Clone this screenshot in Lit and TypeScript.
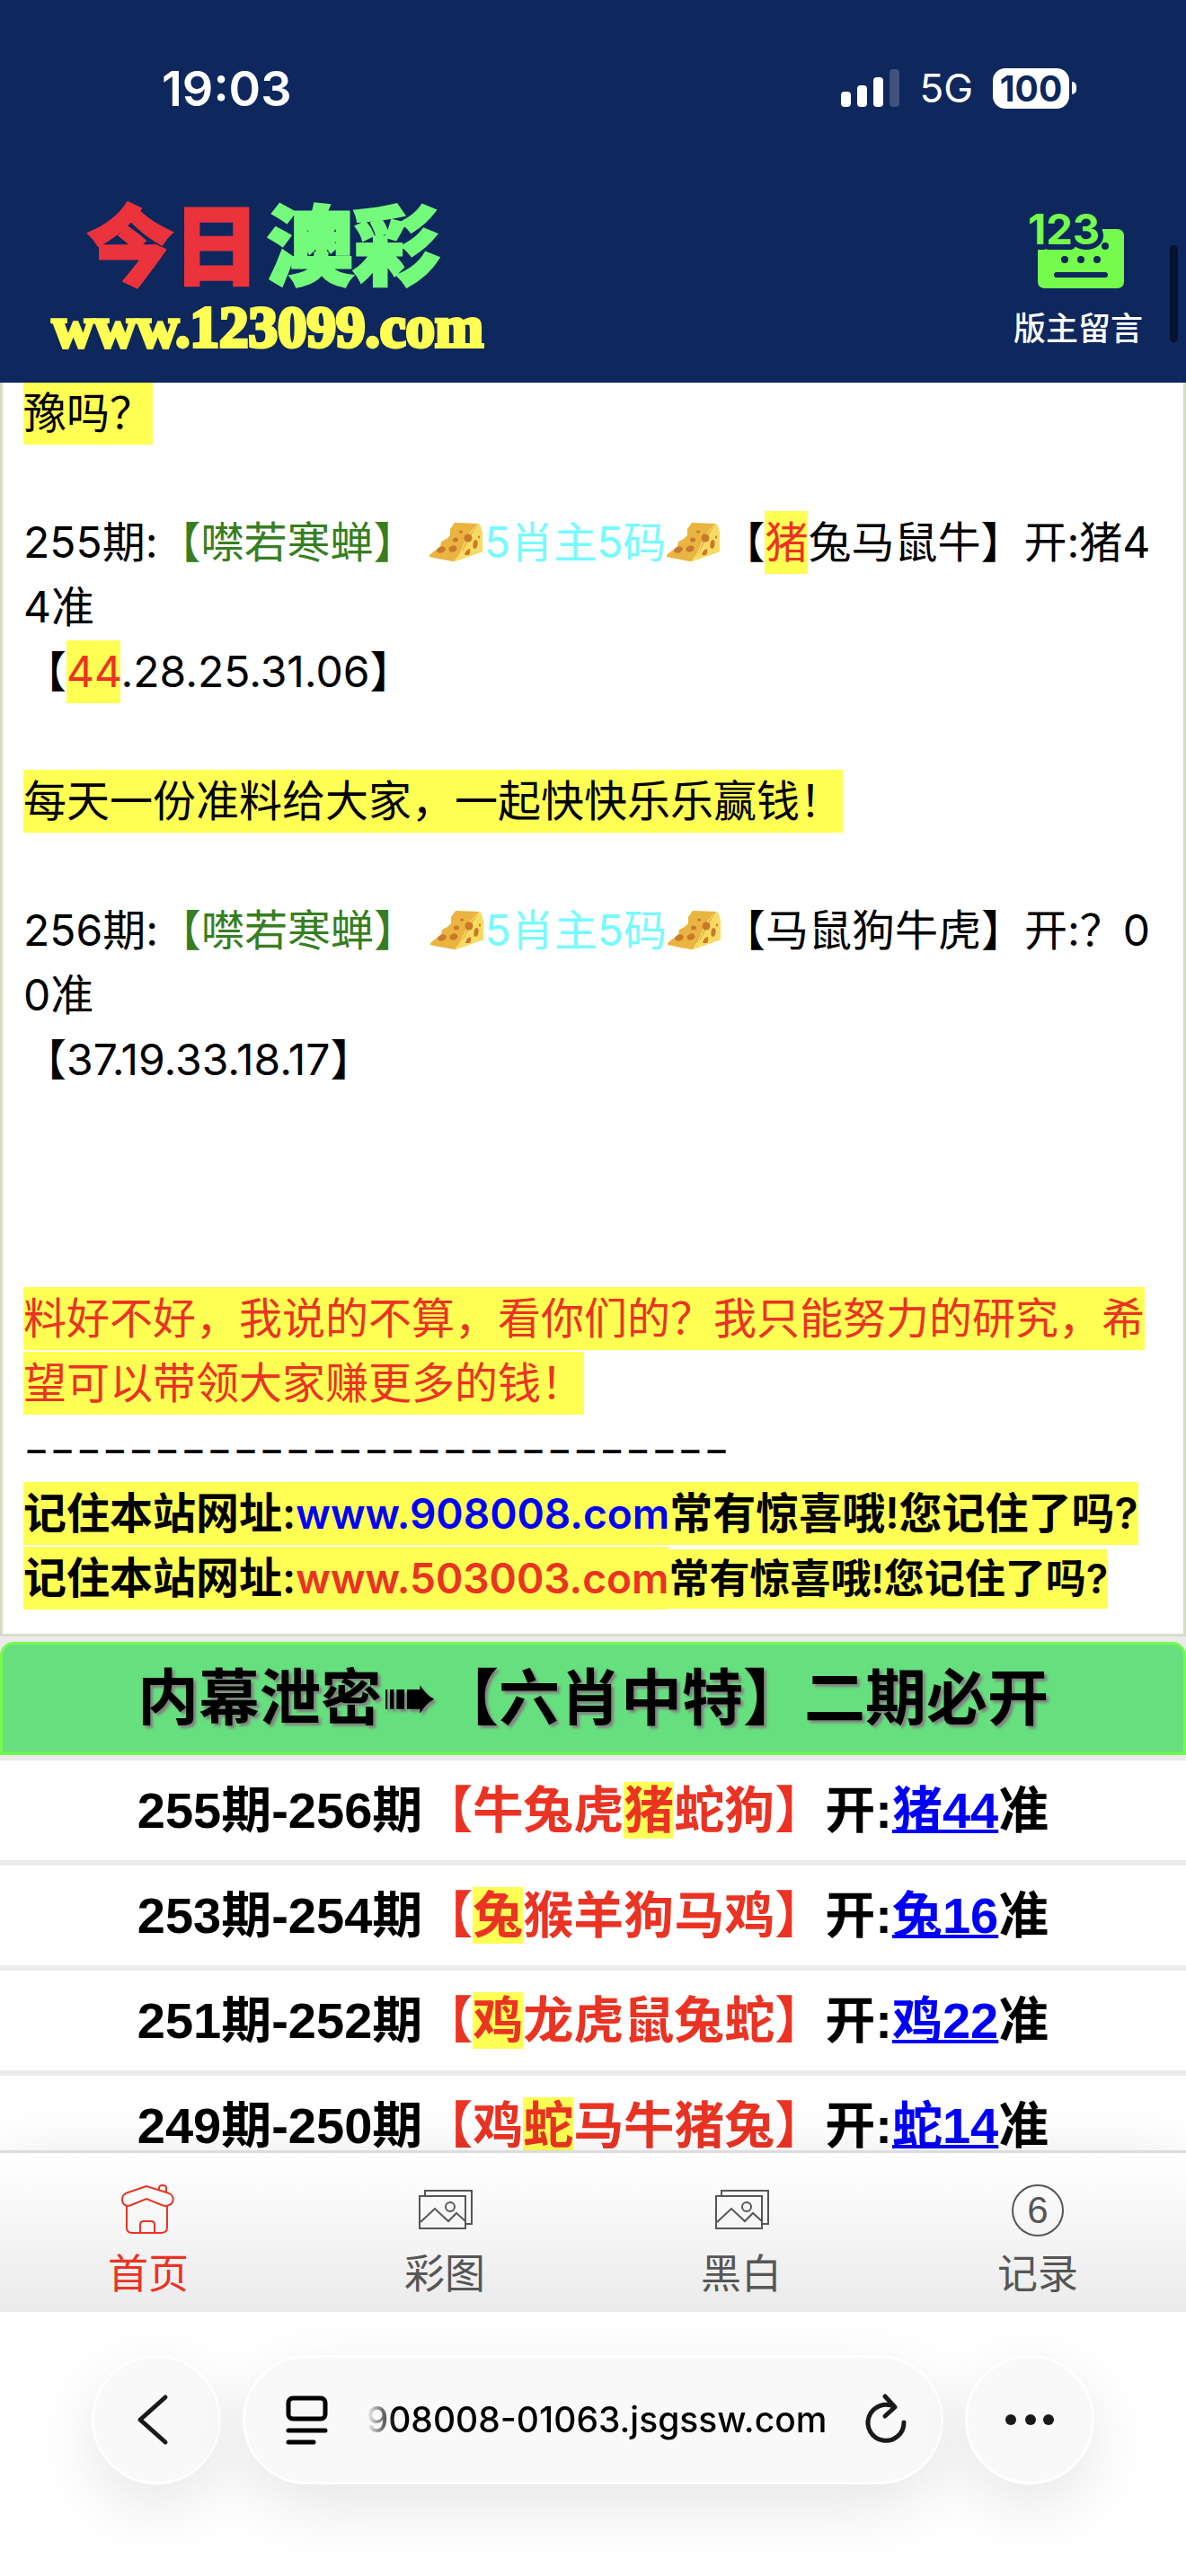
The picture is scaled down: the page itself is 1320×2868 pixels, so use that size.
import { LitElement, html, css, svg, nothing } from "lit";
import { customElement, property } from "lit/decorators.js";

interface Draw {
  range: string;
  before: string;
  hit: string;
  after: string;
  result: string;
}

const DRAWS: Draw[] = [
  { range: "255期-256期", before: "牛兔虎", hit: "猪", after: "蛇狗", result: "猪44" },
  { range: "253期-254期", before: "", hit: "兔", after: "猴羊狗马鸡", result: "兔16" },
  { range: "251期-252期", before: "", hit: "鸡", after: "龙虎鼠兔蛇", result: "鸡22" },
  { range: "249期-250期", before: "鸡", hit: "蛇", after: "马牛猪兔", result: "蛇14" },
];

const cheese = html`<svg class="cheese" viewBox="0 0 62 45" role="img" aria-label="奶酪">
  <path d="M1 37 7 32 13 28 14 22 20 19 24 15 24 8 29 1 56 2 Q60 8 60 17 V33 L29 44 Q25 44 1 39Z" fill="#e9b440" />
  <path d="M56 2 Q60 8 60 17 V33 L29 44 Q38 34 42 25 T56 2Z" fill="#f8dc61" />
  <path d="M56 2 Q44 12 40 24 T29 44" fill="none" stroke="#fbe886" stroke-width="1" />
  <g fill="#c9782c">
    <ellipse cx="14" cy="31" rx="5" ry="3.500" transform="rotate(-20 14 31)" />
    <ellipse cx="27" cy="30" rx="4.500" ry="3.500" transform="rotate(-20 27 30)" />
    <ellipse cx="30" cy="20" rx="3" ry="2.500" />
    <ellipse cx="36" cy="11" rx="2" ry="1.500" />
    <ellipse cx="44" cy="18" rx="4.500" ry="4.500" />
    <ellipse cx="52" cy="25" rx="2.500" ry="5" transform="rotate(8 52 25)" />
    <path d="M40 37q1-6 6-7q1 4-1 7z" />
    <ellipse cx="56" cy="17" rx="1" ry="1.800" />
  </g>
</svg>`;

const homeIcon = svg`
  <path d="M28 2 6 9.500C-1 12-1 24 8 24L11 23 28 16 45 23 49 24C60 23 60 12 52 9.500Z" transform="translate(3 1)" />
  <path d="M9 25V49q0 6 6 6H47q7 0 7-6V25" />
  <path d="M24 55V46q0-4 4-4H36q4 0 4 4V55" />
  <path d="M45 8V5q0-3 4-3t4 3V11" />`;

const pictureIcon = svg`
  <rect x="5" y="14" width="51" height="36" />
  <path d="M11 13V8H63V45H57" />
  <path d="M6 43 22 28 37 42 46 33 56 42" />
  <circle cx="39" cy="26" r="5" />`;

const roundIcon = svg`
  <circle cx="33" cy="30" r="28" />
  <text class="digit" x="33" y="44" text-anchor="middle">6</text>`;

@customElement("status-bar")
class StatusBar extends LitElement {
  static styles = css`
    :host {
      display: flex;
      align-items: center;
      justify-content: space-between;
      padding: 64px 122px 0 180px;
      height: 68px;
      color: #fff;
      font-family: Inter, "Liberation Sans", sans-serif;
    }
    .time {
      font-size: 54px;
      font-weight: 600;
    }
    .signals {
      display: flex;
      align-items: center;
      gap: 22px;
    }
    .network {
      font-size: 44px;
      font-weight: 400;
    }
    .bars {
      width: 65px;
      height: 42px;
    }
    .battery {
      display: flex;
      align-items: center;
      gap: 3px;
    }
    .level {
      width: 85px;
      border-radius: 14px;
      background: #fff;
      color: #0e275d;
      text-align: center;
      font-size: 39px;
      font-weight: 700;
      line-height: 45px;
    }
    .nub {
      width: 5px;
      height: 14px;
      border-radius: 0 6px 6px 0;
      background: #fff;
    }
  `;
  render() {
    return html`
      <span class="time">19:03</span>
      <div class="signals">
        <svg class="bars" viewBox="0 0 65 42" fill="#fff" aria-hidden="true">
          <rect x="0" y="25" width="11" height="17" rx="4" />
          <rect x="18" y="18" width="11" height="24" rx="4" />
          <rect x="36" y="9" width="11" height="33" rx="4" />
          <rect x="54" y="0" width="11" height="42" rx="4" fill="#3e527d" />
        </svg>
        <span class="network">5G</span>
        <span class="battery"><span class="level">100</span><span class="nub"></span></span>
      </div>
    `;
  }
}

@customElement("site-header")
class SiteHeader extends LitElement {
  static styles = css`
    :host {
      display: flex;
      align-items: flex-start;
      justify-content: space-between;
      padding: 84px 48px 22px 58px;
      color: #fff;
      font-family: Inter, "Noto Sans CJK SC", sans-serif;
    }
    a {
      color: inherit;
      text-decoration: none;
    }
    .logo {
      display: flex;
      flex-direction: column;
      gap: 4px;
    }
    .name {
      display: flex;
      gap: 8px;
      padding-left: 39px;
      font-family: "Noto Sans CJK SC", sans-serif;
      font-size: 96px;
      font-weight: 900;
      line-height: 104px;
      -webkit-text-stroke: 3px currentColor;
    }
    .today {
      color: #eb333c;
    }
    .lottery {
      color: #75fb7c;
    }
    .domain {
      color: #ffff54;
      font-family: "Liberation Serif", serif;
      font-size: 65px;
      font-weight: 700;
      line-height: 80px;
      -webkit-text-stroke: 4px currentColor;
    }
    .message {
      display: flex;
      flex-direction: column;
      align-items: center;
      gap: 16px;
      padding-top: 20px;
      font-size: 36px;
      font-weight: 500;
      line-height: 56px;
    }
    .icon {
      width: 110px;
      height: 86px;
      overflow: visible;
    }
    .numbers {
      font-family: Inter, sans-serif;
      font-size: 47px;
      font-weight: 700;
      paint-order: stroke;
    }
  `;
  render() {
    return html`
      <a class="logo" href="#home">
        <span class="name"><span class="today">今日</span><span class="lottery">澳彩</span></span>
        <span class="domain">www.123099.com</span>
      </a>
      <a class="message" href="#messages">
        <svg class="icon" viewBox="0 0 110 86" aria-hidden="true">
          <path d="M10 38 70 38 82 19H98q8 0 8 8V77q0 8-8 8H18q-8 0-8-8Z" fill="#75fb4c" />
          <text class="numbers" x="-1" y="36" fill="#75fb4c" stroke="#0e275d" stroke-width="12" stroke-linejoin="round">123</text>
          <g fill="#0e275d">
            <circle cx="85" cy="38" r="4" />
            <circle cx="40" cy="53" r="4" />
            <circle cx="58" cy="53" r="4" />
            <circle cx="76" cy="53" r="4" />
            <rect x="28" y="67" width="60" height="6" rx="3" />
          </g>
        </svg>
        <span>版主留言</span>
      </a>
    `;
  }
}

@customElement("forecast-post")
class ForecastPost extends LitElement {
  static styles = css`
    :host {
      display: block;
      border: 3px solid #d7dcc5;
      border-top: 0;
      background: #fff;
      padding: 0 23px 25px;
      color: #000;
      font-family: Inter, "Noto Sans CJK SC", sans-serif;
      font-size: 48px;
      line-height: 72px;
      word-break: break-all;
      text-spacing-trim: space-all;
    }
    p {
      margin: 0 0 72px;
      font-weight: 400;
    }
    .first {
      margin-top: -2px;
    }
    .last {
      margin-bottom: 216px;
    }
    .closing {
      margin-bottom: 0;
    }
    .dashes {
      font-size: 44px;
    }
    .sites {
      margin: 0;
      font-weight: 600;
    }
    mark {
      background: #ffff54;
      color: inherit;
      padding: 5px 0 6px;
    }
    .red {
      color: #ea3323;
    }
    .title {
      color: #377e22;
    }
    .pick {
      color: #75fbfd;
    }
    .blue {
      color: #0000f5;
    }
    .small {
      font-size: 45px;
    }
    a {
      font-size: 46px;
      text-decoration: none;
    }
    .cheese {
      width: 62px;
      height: 45px;
      vertical-align: -5px;
    }
  `;
  private issue(no: string, hit: string, rest: string, result: string, hitCode: string, codes: string, last = false) {
    return html`<p class=${last ? "last" : ""}>${no}期:<span class="title">【噤若寒蝉】</span> ${cheese}<span class="pick">5肖主5码</span>${cheese}【${hit ? html`<mark class="red">${hit}</mark>` : nothing}${rest}】开:${result}准<br />【${hitCode ? html`<mark class="red">${hitCode}</mark>` : nothing}${codes}】</p>`;
  }
  render() {
    return html`
      <p class="first"><mark>豫吗？</mark></p>
      ${this.issue("255", "猪", "兔马鼠牛", "猪44", "44", ".28.25.31.06")}
      <p><mark>每天一份准料给大家，一起快快乐乐赢钱！</mark></p>
      ${this.issue("256", "", "马鼠狗牛虎", "？00", "", "37.19.33.18.17", true)}
      <p class="closing">
        <mark class="red">料好不好，我说的不算，看你们的？我只能努力的研究，希望可以带领大家赚更多的钱！</mark><br />
        <span class="dashes">−−−−−−−−−−−−−−−−−−−−−−−−−−−</span>
      </p>
      <p class="sites">
        <mark>记住本站网址:<a class="blue" href="#908008">www.908008.com</a>常有惊喜哦!您记住了吗?</mark><br />
        <mark>记住本站网址:<a class="red" href="#503003">www.503003.com</a></mark><mark class="small">常有惊喜哦!您记住了吗?</mark>
      </p>
    `;
  }
}

@customElement("draw-list")
class DrawList extends LitElement {
  static styles = css`
    :host {
      display: flex;
      flex-direction: column;
      gap: 6px;
      padding-top: 6px;
      color: #000;
      font-family: "Liberation Sans", "Noto Sans CJK SC", sans-serif;
      font-weight: 700;
      text-align: center;
      text-spacing-trim: space-all;
    }
    h2 {
      margin: 0;
      border: 3px solid #75fb4c;
      border-radius: 15px 15px 0 0;
      background: #66df7e;
      font-size: 68px;
      line-height: 120px;
      text-shadow: 3px 3px 3px #808080;
    }
    .arrow {
      font-family: "DejaVu Sans", sans-serif;
      font-size: 74px;
      line-height: 1;
    }
    ul {
      display: flex;
      flex-direction: column;
      gap: 6px;
      margin: 0;
      padding: 0;
      list-style: none;
    }
    li {
      background: #fff;
      font-size: 56px;
      line-height: 111px;
    }
    .picks {
      color: #ea3323;
    }
    mark {
      background: #ffff54;
      color: inherit;
    }
    a {
      color: #0000f5;
      text-decoration-thickness: 4px;
    }
  `;
  render() {
    return html`
      <h2>内幕泄密<span class="arrow">➠</span>【六肖中特】二期必开</h2>
      <ul>
        ${DRAWS.map(
          (d) => html`<li>${d.range}<span class="picks">【${d.before}<mark>${d.hit}</mark>${d.after}】</span>开:<a href="#result">${d.result}</a>准</li>`,
        )}
      </ul>
    `;
  }
}

@customElement("tab-link")
class TabLink extends LitElement {
  @property() label = "";
  @property({ type: Boolean }) active = false;
  @property({ attribute: false }) icon: unknown = nothing;
  static styles = css`
    :host {
      display: block;
      flex: 1;
    }
    a {
      display: flex;
      flex-direction: column;
      align-items: center;
      gap: 8px;
      padding-top: 34px;
      color: #565656;
      font-family: "Noto Sans CJK SC", sans-serif;
      font-size: 45px;
      line-height: 60px;
      text-decoration: none;
    }
    .active {
      color: #ea3323;
    }
    svg {
      width: 66px;
      height: 60px;
      fill: none;
      stroke: currentColor;
      stroke-width: 2;
    }
    .digit {
      fill: currentColor;
      stroke: none;
      font-family: "Liberation Sans", sans-serif;
      font-size: 42px;
    }
  `;
  render() {
    return html`<a class=${this.active ? "active" : ""} href="#tab">
      <svg viewBox="0 0 66 60" aria-hidden="true">${this.icon}</svg>
      <span>${this.label}</span>
    </a>`;
  }
}

@customElement("browser-bar")
class BrowserBar extends LitElement {
  static styles = css`
    :host {
      display: flex;
      gap: 24px;
      padding: 48px 102px 102px;
      background: #fff;
      font-family: Inter, "Liberation Sans", sans-serif;
    }
    .round,
    .address {
      box-sizing: border-box;
      display: flex;
      align-items: center;
      justify-content: center;
      height: 144px;
      border: 3px solid #fff;
      border-radius: 72px;
      background: #f9f9f9;
      box-shadow: 0 24px 72px rgba(0, 0, 0, 0.1);
    }
    button {
      padding: 0;
      border: 0;
      background: none;
      color: #1a1a1a;
    }
    .round {
      width: 144px;
      flex: none;
    }
    .address {
      flex: 1;
      min-width: 0;
      justify-content: space-between;
      padding: 0 34px 0 42px;
    }
    .url {
      color: #000;
      font-size: 39px;
      font-weight: 500;
      line-height: 54px;
      -webkit-mask-image: linear-gradient(90deg, transparent, #000 32px);
      mask-image: linear-gradient(90deg, transparent, #000 32px);
    }
    svg {
      display: block;
      width: 54px;
      height: 60px;
      fill: none;
      stroke: currentColor;
      stroke-width: 5;
      stroke-linecap: round;
      stroke-linejoin: round;
    }
  `;
  render() {
    return html`
      <button class="round" aria-label="返回">
        <svg viewBox="0 0 54 60"><path d="M38 5 10 30 38 55" transform="translate(-1 0)" /></svg>
      </button>
      <div class="address">
        <button aria-label="页面设置">
          <svg viewBox="0 0 54 60" color="#000">
            <rect x="6" y="6" width="41" height="23" rx="5" />
            <path d="M6 42H47M6 55H34" />
          </svg>
        </button>
        <span class="url">908008-01063.jsgssw.com</span>
        <button aria-label="重新加载">
          <svg viewBox="0 0 54 60"><path d="M47 33A20 20 0 1 1 37 16M26 4 37 16 26 26" /></svg>
        </button>
      </div>
      <button class="round" aria-label="更多">
        <svg viewBox="0 0 54 60">
          <g fill="currentColor" stroke="none"><circle cx="6" cy="30" r="6" /><circle cx="28" cy="30" r="6" /><circle cx="48" cy="30" r="6" /></g>
        </svg>
      </button>
    `;
  }
}

@customElement("app-root")
class AppRoot extends LitElement {
  static styles = css`
    :host {
      display: flex;
      flex-direction: column;
      position: relative;
      height: 100vh;
      overflow: hidden;
      background: #fff;
    }
    .top {
      flex: none;
      background: #0e275d;
    }
    main {
      flex: 1;
      min-height: 0;
      overflow: hidden;
      background: #ebebeb;
    }
    nav {
      position: relative;
      display: flex;
      flex: none;
      box-sizing: border-box;
      height: 180px;
      border-top: 3px solid #dcdcdc;
      background: linear-gradient(#fff, #ebebeb);
      box-shadow: 0 0 60px rgba(0, 0, 0, 0.08);
    }
    browser-bar {
      position: relative;
    }
    .thumb {
      position: absolute;
      top: 273px;
      right: 9px;
      width: 9px;
      height: 108px;
      border-radius: 5px;
      background: #05132f;
    }
  `;
  render() {
    return html`
      <header class="top">
        <status-bar></status-bar>
        <site-header></site-header>
      </header>
      <main>
        <forecast-post></forecast-post>
        <draw-list></draw-list>
      </main>
      <nav>
        <tab-link label="首页" active .icon=${homeIcon}></tab-link>
        <tab-link label="彩图" .icon=${pictureIcon}></tab-link>
        <tab-link label="黑白" .icon=${pictureIcon}></tab-link>
        <tab-link label="记录" .icon=${roundIcon}></tab-link>
      </nav>
      <browser-bar></browser-bar>
      <div class="thumb"></div>
    `;
  }
}
